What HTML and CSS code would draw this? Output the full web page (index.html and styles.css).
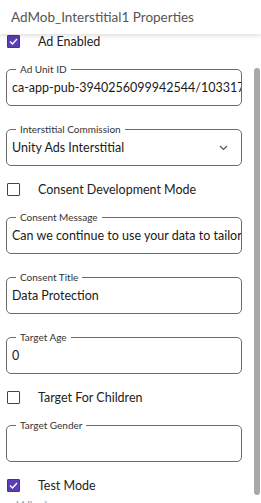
FILE: index.html
```html
<!DOCTYPE html>
<html lang="en">
<head>
    <meta charset="UTF-8">
    <meta name="viewport" content="width=device-width, initial-scale=1.0">
    <title>AdMob_Interstitial1 Properties</title>
    <link rel="stylesheet" href="styles.css">
</head>
<body>
    <div class="panel">
        <div class="header">AdMob_Interstitial1 Properties</div>
        <div class="body">
            <div class="content">
                <label class="check">
                    <span class="box checked"><svg width="13" height="13" viewBox="0 0 13 13"><polyline points="3,6.5 5.5,9 10,4" fill="none" stroke="#fff" stroke-width="1.4"/></svg></span>
                    <span>Ad Enabled</span>
                </label>

                <div class="field first">
                    <span class="legend">Ad Unit ID</span>
                    <div class="value">ca-app-pub-3940256099942544/1033173712</div>
                </div>

                <div class="field">
                    <span class="legend">Interstitial Commission</span>
                    <div class="value select">
                        <span>Unity Ads Interstitial</span>
                        <svg width="9" height="6" viewBox="0 0 9 6"><polyline points="1,1 4.5,4.5 8,1" fill="none" stroke="#555" stroke-width="1.2"/></svg>
                    </div>
                </div>

                <label class="check">
                    <span class="box"></span>
                    <span>Consent Development Mode</span>
                </label>

                <div class="field first">
                    <span class="legend">Consent Message</span>
                    <div class="value">Can we continue to use your data to tailor ads for you?</div>
                </div>

                <div class="field">
                    <span class="legend">Consent Title</span>
                    <div class="value">Data Protection</div>
                </div>

                <div class="field">
                    <span class="legend">Target Age</span>
                    <div class="value">0</div>
                </div>

                <label class="check">
                    <span class="box"></span>
                    <span>Target For Children</span>
                </label>

                <div class="field first">
                    <span class="legend">Target Gender</span>
                    <div class="value"></div>
                </div>

                <label class="check">
                    <span class="box checked"><svg width="13" height="13" viewBox="0 0 13 13"><polyline points="3,6.5 5.5,9 10,4" fill="none" stroke="#fff" stroke-width="1.4"/></svg></span>
                    <span>Test Mode</span>
                </label>

                <div class="section">&#9656; Window</div>
            </div>
            <div class="scrollbar"><div class="thumb"></div></div>
        </div>
    </div>
</body>
</html>
```

FILE: styles.css
```css
body {
    margin: 0;
    font-family: Lato, "Open Sans", sans-serif;
    background: #fff;
    color: #222;
}
.panel {
    width: 261px;
    height: 503px;
    overflow: hidden;
    display: flex;
    flex-direction: column;
}
.header {
    height: 34px;
    flex-shrink: 0;
    line-height: 34px;
    padding-left: 11px;
    font-size: 13.5px;
    color: #555;
    background: #fff;
    box-shadow: 0 2px 4px rgba(0, 0, 0, 0.12);
    position: relative;
    z-index: 1;
}
.body {
    display: flex;
    flex: 1;
    min-height: 0;
}
.content {
    width: 247px;
    padding: 1px 0 0 6px;
    box-sizing: border-box;
}
.check {
    display: flex;
    align-items: center;
    height: 13px;
    margin-top: 17px;
    font-size: 12.5px;
    margin-left: 1px;
}
.check:first-child {
    margin-top: 0;
}
.box {
    width: 13px;
    height: 13px;
    box-sizing: border-box;
    border: 1px solid #444;
    border-radius: 1px;
    margin-right: 18px;
    flex-shrink: 0;
    display: flex;
}
.box.checked {
    background: #5b3db5;
    border-color: #4a2f99;
}
.box.checked svg {
    margin: -1px;
}
.field {
    position: relative;
    width: 236px;
    height: 37px;
    box-sizing: border-box;
    border: 1px solid #6a6a6a;
    border-radius: 5px;
    margin-top: 23px;
}
.field.first {
    margin-top: 21px;
}
.legend {
    position: absolute;
    top: -8px;
    left: 9px;
    padding: 0 4px;
    background: #fff;
    font-size: 10px;
    line-height: 14px;
    color: #333;
}
.value {
    padding: 0 5px;
    height: 35px;
    line-height: 35px;
    font-size: 12.5px;
    white-space: nowrap;
    overflow: hidden;
    color: #1a1a1a;
}
.select {
    display: flex;
    align-items: center;
    justify-content: space-between;
    padding-right: 13px;
}
.section {
    margin-top: 6px;
    font-size: 13px;
    color: #aaa;
}
.scrollbar {
    flex: 1;
    display: flex;
    justify-content: center;
    padding-left: 5px;
}
.thumb {
    width: 6px;
    height: 427px;
    margin-top: 34px;
    background: #a9a9a9;
    border-radius: 3px;
}
```
